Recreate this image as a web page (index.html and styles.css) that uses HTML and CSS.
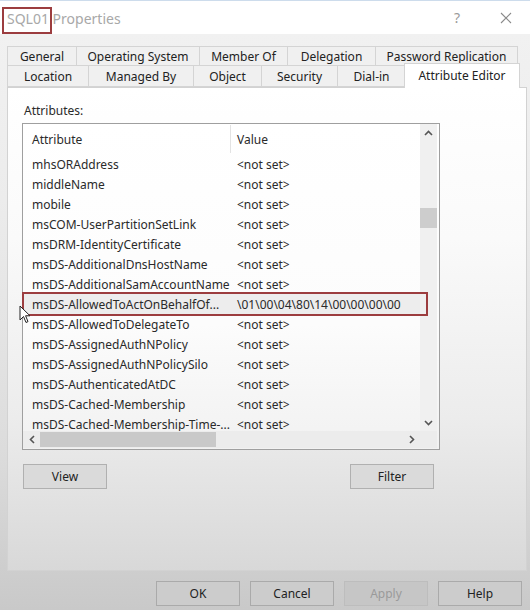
FILE: index.html
```html
<!DOCTYPE html>
<html>
<head>
<meta charset="utf-8">
<title>SQL01 Properties</title>
<link rel="stylesheet" href="styles.css">
</head>
<body>
<div class="window">
  <div class="titlebar">
    <div class="title"><span class="hl">SQL01</span> Properties</div>
    <div class="controls">
      <span class="help">?</span>
      <svg class="close" width="12" height="12" viewBox="0 0 12 12"><path d="M1 1 L11 11 M11 1 L1 11" stroke="#8a8a8a" stroke-width="1.1" fill="none"/></svg>
    </div>
  </div>

  <div class="tabs">
    <div class="tabrow r1">
      <div class="tab">General</div>
      <div class="tab">Operating System</div>
      <div class="tab">Member Of</div>
      <div class="tab">Delegation</div>
      <div class="tab">Password Replication</div>
    </div>
    <div class="tabrow r2">
      <div class="tab">Location</div>
      <div class="tab">Managed By</div>
      <div class="tab">Object</div>
      <div class="tab">Security</div>
      <div class="tab">Dial-in</div>
      <div class="tab selected">Attribute Editor</div>
    </div>
  </div>

  <div class="panel">
    <div class="label">Attributes:</div>
    <div class="listbox">
      <div class="listmain">
        <div class="listhead">
          <div class="col1">Attribute</div>
          <div class="col2">Value</div>
        </div>
        <div class="rows">
          <div class="row"><div class="col1">mhsORAddress</div><div class="col2">&lt;not set&gt;</div></div>
          <div class="row"><div class="col1">middleName</div><div class="col2">&lt;not set&gt;</div></div>
          <div class="row"><div class="col1">mobile</div><div class="col2">&lt;not set&gt;</div></div>
          <div class="row"><div class="col1">msCOM-UserPartitionSetLink</div><div class="col2">&lt;not set&gt;</div></div>
          <div class="row"><div class="col1">msDRM-IdentityCertificate</div><div class="col2">&lt;not set&gt;</div></div>
          <div class="row"><div class="col1">msDS-AdditionalDnsHostName</div><div class="col2">&lt;not set&gt;</div></div>
          <div class="row"><div class="col1">msDS-AdditionalSamAccountName</div><div class="col2">&lt;not set&gt;</div></div>
          <div class="row sel"><div class="col1">msDS-AllowedToActOnBehalfOf...</div><div class="col2">\01\00\04\80\14\00\00\00\00</div></div>
          <div class="row"><div class="col1">msDS-AllowedToDelegateTo</div><div class="col2">&lt;not set&gt;</div></div>
          <div class="row"><div class="col1">msDS-AssignedAuthNPolicy</div><div class="col2">&lt;not set&gt;</div></div>
          <div class="row"><div class="col1">msDS-AssignedAuthNPolicySilo</div><div class="col2">&lt;not set&gt;</div></div>
          <div class="row"><div class="col1">msDS-AuthenticatedAtDC</div><div class="col2">&lt;not set&gt;</div></div>
          <div class="row"><div class="col1">msDS-Cached-Membership</div><div class="col2">&lt;not set&gt;</div></div>
          <div class="row"><div class="col1">msDS-Cached-Membership-Time-...</div><div class="col2">&lt;not set&gt;</div></div>
        </div>
      </div>
      <div class="vscroll">
        <div class="sbtn"><svg width="9" height="6" viewBox="0 0 9 6"><path d="M1 5 L4.5 1.5 L8 5" stroke="#555" stroke-width="1.6" fill="none"/></svg></div>
        <div class="vtrack"><div class="vthumb"></div></div>
        <div class="sbtn"><svg width="9" height="6" viewBox="0 0 9 6"><path d="M1 1 L4.5 4.5 L8 1" stroke="#555" stroke-width="1.6" fill="none"/></svg></div>
      </div>
      <div class="hscroll">
        <div class="hbtn"><svg width="6" height="9" viewBox="0 0 6 9"><path d="M5 1 L1.5 4.5 L5 8" stroke="#555" stroke-width="1.6" fill="none"/></svg></div>
        <div class="htrack"><div class="hthumb"></div></div>
        <div class="hbtn"><svg width="6" height="9" viewBox="0 0 6 9"><path d="M1 1 L4.5 4.5 L1 8" stroke="#555" stroke-width="1.6" fill="none"/></svg></div>
      </div>
      <div class="corner"></div>
      <div class="redbox"></div>
    </div>
    <div class="panelbtns">
      <button class="btn">View</button>
      <button class="btn">Filter</button>
    </div>
  </div>

  <div class="footer">
    <button class="btn">OK</button>
    <button class="btn">Cancel</button>
    <button class="btn disabled">Apply</button>
    <button class="btn">Help</button>
  </div>

  <svg class="cursor" width="12" height="19" viewBox="0 0 12 19"><path d="M1 1 L1 15 L4.5 11.5 L7 17.5 L9 16.6 L6.6 10.8 L11 10.8 Z" fill="#fff" stroke="#222" stroke-width="1" stroke-linejoin="round"/></svg>
</div>
</body>
</html>
```

FILE: styles.css
```css
* { box-sizing: border-box; }
html, body { margin: 0; padding: 0; }
body {
  font-family: "Noto Sans", "Open Sans", sans-serif;
  font-size: 12px;
  color: #2a2a2a;
}
.window {
  position: relative;
  width: 530px;
  height: 610px;
  overflow: hidden;
  background: linear-gradient(to bottom, #f2f2f2 0px, #ececec 200px, #dcdcdc 450px, #c9c9c9 610px);
}
.titlebar {
  height: 34px;
  background: #fff;
  border-top: 1px solid #cddcec;
  display: flex;
  align-items: center;
  justify-content: space-between;
  padding: 0 18px 0 7px;
}
.title {
  font-size: 14px;
  color: #a8a8a8;
  position: relative;
  top: 1px;
}
.hl { position: relative; }
.hl::after {
  content: "";
  position: absolute;
  left: -5px;
  right: -3px;
  top: -2px;
  bottom: -6px;
  border: 2px solid #9c3d3f;
}
.controls {
  display: flex;
  align-items: center;
  gap: 40px;
}
.help {
  font-size: 14px;
  color: #9a9a9a;
}
.close { display: block; }

.tabs {
  margin-top: 12px;
  padding-left: 7px;
  position: relative;
  z-index: 2;
}
.tabrow {
  display: grid;
  width: 511px;
}
.r1 { grid-template-columns: 70px 123px 88px 88px 142px; height: 20px; }
.r2 { grid-template-columns: 82px 105px 68px 76px 68px 112px; height: 21px; }
.tab {
  display: flex;
  align-items: center;
  justify-content: center;
  border: 1px solid #d4d4d4;
  border-left: none;
  background: #f0f0f0;
  color: #222;
  white-space: nowrap;
}
.tab:first-child { border-left: 1px solid #d4d4d4; }
.r2 .tab { border-top: none; }
.tab.selected {
  background: #fff;
  margin: -3px -2px -1px -2px;
  border: 1px solid #d4d4d4;
  border-bottom: none;
  align-items: flex-start;
  padding-top: 3px;
}

.panel {
  margin-left: 7px;
  width: 520px;
  height: 484px;
  border: 1px solid #d2d2d2;
  background: linear-gradient(to bottom, #ffffff 0px, #fafafa 150px, #ececec 330px, #d8d8d8 484px);
  padding: 15px 0 0 14px;
  position: relative;
  z-index: 1;
}
.label {
  margin-left: 2px;
  line-height: 16px;
  color: #2a2a2a;
}
.listbox {
  margin-top: 4px;
  width: 418px;
  height: 327px;
  border: 1px solid #9f9f9f;
  background: linear-gradient(to bottom, #ffffff 0px, #fcfcfc 200px, #f1f1f1 327px);
  display: grid;
  grid-template-columns: 397px 17px;
  grid-template-rows: 307px 17px;
  position: relative;
}
.listmain { overflow: hidden; }
.listhead {
  display: flex;
  height: 30px;
  align-items: center;
}
.listhead .col1 {
  border-right: 1px solid #e3e3e3;
  height: 28px;
  display: flex;
  align-items: center;
}
.col1 {
  width: 208px;
  padding-left: 9px;
  white-space: nowrap;
  flex: none;
}
.col2 {
  padding-left: 6px;
  white-space: nowrap;
}
.row {
  display: flex;
  height: 20px;
  align-items: center;
}
.row.sel { background: #ededed; }

.vscroll {
  display: flex;
  flex-direction: column;
  background: #f0f0f0;
}
.sbtn {
  height: 17px;
  display: flex;
  align-items: center;
  justify-content: center;
  flex: none;
}
.vtrack { flex: 1; position: relative; }
.vthumb {
  margin-top: 67px;
  height: 20px;
  background: #cdcdcd;
}
.hscroll {
  display: flex;
  background: #ececec;
}
.hbtn {
  width: 17px;
  display: flex;
  align-items: center;
  justify-content: center;
  flex: none;
}
.htrack { flex: 1; display: flex; align-items: stretch; }
.hthumb {
  width: 176px;
  margin: 1px 0;
  background: #c9c9c9;
}
.corner { background: #ececec; }
.redbox {
  position: absolute;
  left: -1px;
  top: 168px;
  width: 406px;
  height: 24px;
  border: 2px solid #9c3d3f;
}

.btn {
  font-family: "Noto Sans", "Open Sans", sans-serif;
  font-size: 12px;
  color: #222;
  width: 84px;
  height: 25px;
  border: 1px solid #b0b0b0;
  background: #dadada;
  padding: 0;
  margin: 0;
}
.panelbtns {
  margin-top: 14px;
  margin-left: 1px;
  width: 411px;
  display: flex;
  justify-content: space-between;
}
.footer {
  display: flex;
  justify-content: flex-end;
  gap: 10px;
  padding-right: 8px;
  margin-top: 10px;
}
.footer .btn { background: #cccccc; border-color: #aaaaaa; }
.footer .btn.disabled { color: #9a9a9a; background: #c6c6c6; border-color: #bdbdbd; }

.cursor {
  position: absolute;
  left: 19px;
  top: 305px;
  z-index: 5;
}
```
